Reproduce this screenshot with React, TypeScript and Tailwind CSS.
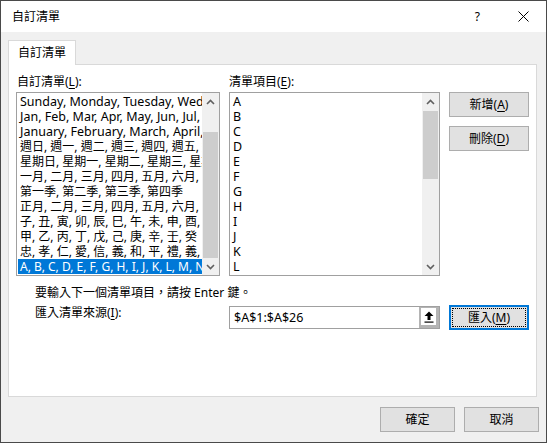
import React from "react";

const FONT = { fontFamily: '"Noto Sans", "Noto Sans CJK TC", sans-serif' };

const leftItems = [
  "Sunday, Monday, Tuesday, Wednesday, Thursday, Friday, Saturday",
  "Jan, Feb, Mar, Apr, May, Jun, Jul, Aug, Sep, Oct, Nov, Dec",
  "January, February, March, April, May, June, July",
  "週日, 週一, 週二, 週三, 週四, 週五, 週六",
  "星期日, 星期一, 星期二, 星期三, 星期四",
  "一月, 二月, 三月, 四月, 五月, 六月, 七月",
  "第一季, 第二季, 第三季, 第四季",
  "正月, 二月, 三月, 四月, 五月, 六月, 七月",
  "子, 丑, 寅, 卯, 辰, 巳, 午, 未, 申, 酉, 戌, 亥",
  "甲, 乙, 丙, 丁, 戊, 己, 庚, 辛, 壬, 癸",
  "忠, 孝, 仁, 愛, 信, 義, 和, 平, 禮, 義, 廉, 恥",
  "A, B, C, D, E, F, G, H, I, J, K, L, M, N, O, P",
];

const rightItems = ["A", "B", "C", "D", "E", "F", "G", "H", "I", "J", "K", "L"];

function Chevron({ up }: { up?: boolean }) {
  return (
    <svg width="9" height="6" viewBox="0 0 9 6">
      <polyline
        points={up ? "1,5 4.5,1.5 8,5" : "1,1 4.5,4.5 8,1"}
        fill="none"
        stroke="#606060"
        strokeWidth="1.6"
      />
    </svg>
  );
}

function ScrollBar({ thumbTop, thumbHeight }: { thumbTop: number; thumbHeight: number }) {
  return (
    <div className="w-[17px] h-full bg-[#f0f0f0] flex flex-col shrink-0">
      <div className="h-[17px] flex items-center justify-center">
        <Chevron up />
      </div>
      <div className="flex-1 relative">
        <div
          className="absolute left-[1px] right-[1px] bg-[#cdcdcd]"
          style={{ top: thumbTop, height: thumbHeight }}
        />
      </div>
      <div className="h-[17px] flex items-center justify-center">
        <Chevron />
      </div>
    </div>
  );
}

function Btn({ children, className = "" }: { children: React.ReactNode; className?: string }) {
  return (
    <div
      className={
        "h-[25px] bg-[#e1e1e1] border border-[#adadad] flex items-center justify-center text-[12px] leading-none text-black " +
        className
      }
    >
      {children}
    </div>
  );
}

export default function App() {
  return (
    <div
      className="w-[547px] h-[443px] border border-[#4a4a4a] bg-[#f0f0f0] flex flex-col text-black text-[12px]"
      style={FONT}
    >
      {/* Title bar */}
      <div className="h-[31px] bg-white flex items-center pl-[11px] pr-[17px] shrink-0">
        <span className="text-[12px] leading-none">自訂清單</span>
        <span className="ml-auto mr-[38px] text-[12px] leading-none">?</span>
        <svg width="11" height="11" viewBox="0 0 11 11">
          <line x1="0.5" y1="0.5" x2="10.5" y2="10.5" stroke="#000" strokeWidth="1" />
          <line x1="10.5" y1="0.5" x2="0.5" y2="10.5" stroke="#000" strokeWidth="1" />
        </svg>
      </div>

      {/* Body */}
      <div className="flex-1 flex flex-col px-[7px] pt-[8px]">
        <div className="flex">
          <div className="relative z-10 -mb-px w-[68px] h-[25px] border border-b-0 border-[#d9d9d9] bg-white flex items-center justify-center leading-none">
            自訂清單
          </div>
        </div>
        <div className="w-[529px] h-[333px] border border-[#d9d9d9] bg-white pl-[7px] pt-[8px]">
          <div className="grid grid-cols-[204px_211px_80px] grid-rows-[19px_184px_auto_auto] gap-x-[9px]">
            {/* labels */}
            <div className="pl-[1px] leading-[18px]">
              自訂清單(<span className="underline underline-offset-2">L</span>):
            </div>
            <div className="leading-[18px]">
              清單項目(<span className="underline underline-offset-2">E</span>):
            </div>
            <div />

            {/* left list */}
            <div className="border border-[#a0a0a0] bg-white p-[1px] flex">
              <div className="flex-1 overflow-hidden">
                {leftItems.map((t, i) => (
                  <div
                    key={i}
                    className={
                      "h-[15px] leading-[15px] whitespace-nowrap pl-[2px] " +
                      (i < 3 ? "text-[12.5px] " : "") +
                      (i === leftItems.length - 1 ? "bg-[#0078d7] text-white" : "")
                    }
                  >
                    {t}
                  </div>
                ))}
              </div>
              <div className="-my-[1px] -mr-[1px] flex">
                <ScrollBar thumbTop={22} thumbHeight={126} />
              </div>
            </div>

            {/* right list */}
            <div className="border border-[#a0a0a0] bg-white flex">
              <div className="flex-1 overflow-hidden pt-[1px] pl-[3px]">
                {rightItems.map((t) => (
                  <div key={t} className="h-[15px] leading-[15px] text-[12.5px]">
                    {t}
                  </div>
                ))}
              </div>
              <ScrollBar thumbTop={1} thumbHeight={68} />
            </div>

            {/* buttons */}
            <div className="flex flex-col gap-[9px]">
              <Btn>
                新增(<span className="underline underline-offset-2">A</span>)
              </Btn>
              <Btn>
                刪除(<span className="underline underline-offset-2">D</span>)
              </Btn>
            </div>

            {/* hint line */}
            <div className="col-span-3 mt-[9px] pl-[19px] h-[16px] leading-[16px]">
              要輸入下一個清單項目，請按 Enter 鍵。
            </div>

            {/* import row */}
            <div className="mt-[4px] pl-[19px] h-[16px] leading-[16px]">
              匯入清單來源(<span className="underline underline-offset-2">I</span>):
            </div>
            <div className="mt-[5px] h-[23px] border border-[#a0a0a0] bg-white flex">
              <div className="flex-1 pl-[4px] leading-[21px] text-[12.5px]">$A$1:$A$26</div>
              <div className="w-[20px] h-full bg-[#b4b4b4] pl-[2px] pt-[1px] pr-[3px] pb-[3px]">
                <div className="w-full h-full bg-white flex items-center justify-center">
                  <svg width="10" height="12" viewBox="0 0 10 12">
                    <polygon points="5,0.5 9.5,5 6.5,5 6.5,9 3.5,9 3.5,5 0.5,5" fill="#000" />
                    <rect x="0.5" y="10.5" width="9" height="1.2" fill="#000" />
                  </svg>
                </div>
              </div>
            </div>
            <div className="mt-[4px] h-[25px] border-2 border-[#0078d7] bg-[#e1e1e1] p-[1px]">
              <div className="w-full h-full border border-dotted border-black flex items-center justify-center leading-none">
                匯入(<span className="underline underline-offset-2">M</span>)
              </div>
            </div>
          </div>
        </div>

        {/* bottom buttons */}
        <div className="mt-[10px] flex justify-end gap-[9px]">
          <Btn className="w-[75px]">確定</Btn>
          <Btn className="w-[75px]">取消</Btn>
        </div>
      </div>
    </div>
  );
}
